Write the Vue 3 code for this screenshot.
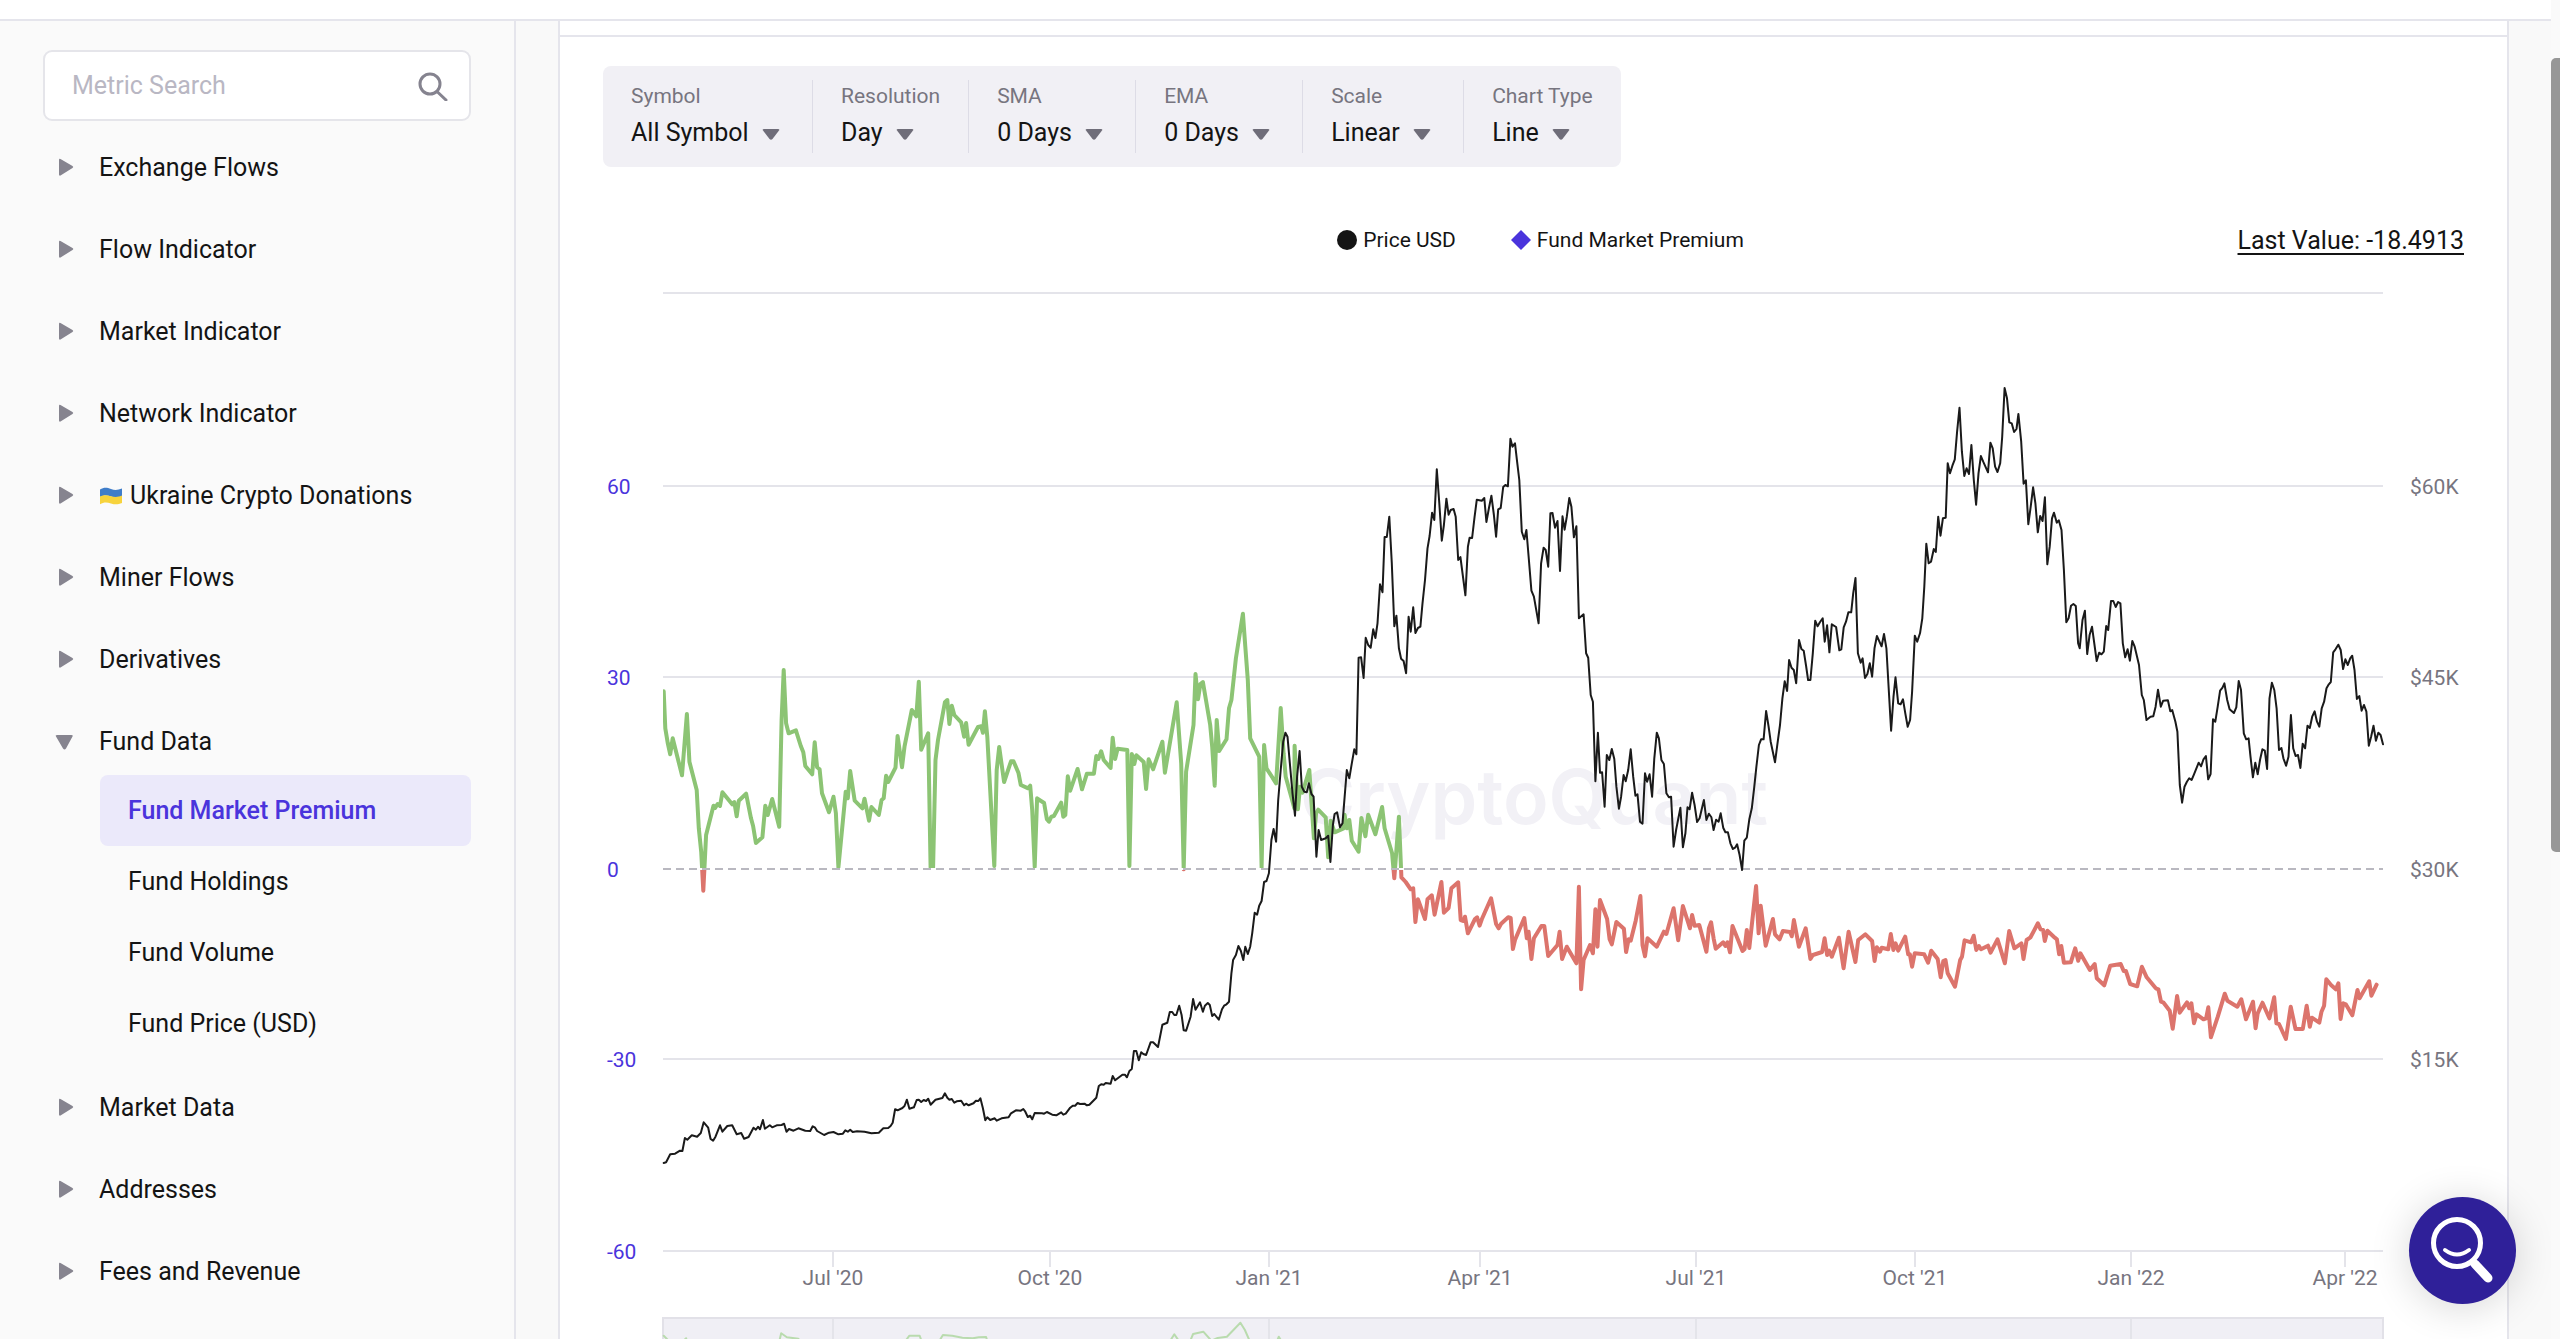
<script setup>
import { ref } from 'vue'

const query = ref('')

const groups = [
  { name: 'Exchange Flows' },
  { name: 'Flow Indicator' },
  { name: 'Market Indicator' },
  { name: 'Network Indicator' },
  { name: 'Ukraine Crypto Donations', flag: true },
  { name: 'Miner Flows' },
  { name: 'Derivatives' },
  {
    name: 'Fund Data',
    items: ['Fund Market Premium', 'Fund Holdings', 'Fund Volume', 'Fund Price (USD)'],
  },
  { name: 'Market Data' },
  { name: 'Addresses' },
  { name: 'Fees and Revenue' },
]
const activeItem = ref('Fund Market Premium')

const filters = [
  { id: 'symbol', label: 'Symbol', value: 'All Symbol' },
  { id: 'resolution', label: 'Resolution', value: 'Day' },
  { id: 'sma', label: 'SMA', value: '0 Days' },
  { id: 'ema', label: 'EMA', value: '0 Days' },
  { id: 'scale', label: 'Scale', value: 'Linear' },
  { id: 'type', label: 'Chart Type', value: 'Line' },
]

const left = 663
const right = 2383
const zeroY = 869

const rows = [
  { y: 293 },
  { y: 486, premium: '60', price: '$60K' },
  { y: 677, premium: '30', price: '$45K' },
  { y: 869, premium: '0', price: '$30K', zero: true },
  { y: 1059, premium: '-30', price: '$15K' },
  { y: 1251, premium: '-60' },
]

const months = [
  { x: 833, label: "Jul '20", major: true },
  { x: 1050, label: "Oct '20" },
  { x: 1269, label: "Jan '21", major: true },
  { x: 1480, label: "Apr '21" },
  { x: 1696, label: "Jul '21", major: true },
  { x: 1915, label: "Oct '21" },
  { x: 2131, label: "Jan '22", major: true },
  { x: 2345, label: "Apr '22" },
]

// Each run of a series has its own origin and horizontal density.
function place(x0, y0, span, points) {
  return points
    .trim()
    .split(/\s+/)
    .map((pair) => {
      const [x, y] = pair.split(',').map(Number)
      return `${(x0 + (x * span) / 1568).toFixed(1)},${(y0 + y / 3).toFixed(1)}`
    })
    .join(' ')
}

const premium = [
  place(640, 580, 640, `
    58,334 62,445 68,490 74,523 80,475 103,586 115,402 121,545 139,630 144,745 150,815 155,932 162,765
    180,677 184,684 190,672 196,678 202,637 226,673 231,666 237,709 242,662 260,641 272,715 277,738
    284,789 300,772 307,677 313,705 324,657 341,740 347,420 352,270 358,430 364,460 382,451 394,498
    400,517 405,558 422,583 428,487 434,562 440,568 446,640 463,697 474,650 480,700 486,862 504,635
    509,655 515,573 526,662 545,685 550,656 561,722 567,681 585,705 592,660 597,655 603,587 608,606
    626,563 631,468 642,562 648,500 666,390 677,409 683,305 689,509 706,460 712,862 718,862 724,540
    730,480 747,367 753,360 758,432 764,377 770,405 787,427 794,470 799,429 805,494 828,441 836,439
    840,458 845,394 851,470 868,858 874,570 880,501 892,606 909,544 915,544 927,578 933,615 951,625
    956,617 961,690 967,860 973,655 990,669 997,718 1002,725 1008,710 1014,708 1032,668 1037,710
    1042,705 1048,589 1054,632 1072,567 1083,628 1095,581 1112,581 1118,528 1123,537 1130,514 1136,540
    1153,564 1158,473 1164,537 1170,506 1194,510 1199,858 1205,522 1211,552 1216,526 1234,546 1240,627
    1246,538 1257,568 1280,485 1286,578 1315,367 1326,550 1332,868 1338,575 1356,435 1361,282 1367,358
    1373,312 1379,306 1397,435 1402,500 1408,617 1413,420 1419,513 1437,478 1443,385 1449,360 1460,235
    1477,101 1483,200 1489,300 1495,475 1517,530 1523,862 1529,495 1535,565`),
  place(1240, 400, 560, `
    101,1150 114,924 122,1060 128,1130 146,1200 152,1225 153,1037 162,1228 168,1160 175,1178 194,1110
    207,1315 213,1240 219,1229 240,1252 247,1372 254,1262 265,1297 290,1285 293,1244 299,1285 306,1260
    313,1322 332,1355 340,1254 351,1309 359,1244 379,1303 398,1221 405,1285 426,1360 432,1435 445,1250`),
  place(1340, 820, 560, `
    172,172 184,186 198,208 205,205 211,306 218,238 238,297 245,238 257,226 265,284 284,186 291,278
    304,264 312,205 331,187 338,300 346,303 350,290 358,340 378,297 384,292 391,317 397,298 423,235
    437,312 444,325 451,311 471,292 478,294 484,387 490,360 516,294 523,355 528,335 536,417 543,355
    564,318 572,318 583,408 609,375 615,335 622,417 635,380 662,430 669,200 675,508 682,420 700,375
    708,400 715,268 721,380 728,240 748,297 755,358 761,373 774,306 795,326 801,396 808,358 814,362
    828,302 841,228 847,375 854,409 861,355 887,380 907,335 914,342 934,265 947,361 960,258 980,325
    986,285 993,317 1006,315 1026,395 1033,325 1039,307 1046,355 1052,386 1073,367 1079,378 1085,367
    1092,397 1099,318 1127,393 1133,387 1139,330 1146,384 1165,198 1172,340 1178,257 1192,377 1212,297
    1218,343 1231,358 1240,333 1260,336 1265,349 1271,300 1285,380 1304,325 1317,417 1324,405 1350,396
    1357,355 1364,405 1370,392 1377,410 1397,353 1410,445 1424,335 1443,426 1451,360 1471,343 1490,363
    1497,423 1503,382`),
  place(1880, 860, 680, `
    0,275 4,263 19,268 25,222 31,270 36,250 42,272 58,230 65,283 69,283 74,320 80,280 102,283 111,308
    118,272 133,297 140,352 146,303 151,300 156,340 173,380 185,300 189,290 195,241 210,247 216,227
    222,270 228,258 233,268 249,257 255,278 271,238 288,310 298,213 310,265 326,250 331,297 338,240
    347,232 364,190 370,208 376,210 380,243 386,212 403,233 408,238 413,283 418,258 424,308 440,307
    450,265 457,302 462,280 484,330 495,312 500,355 517,376 531,317 555,312 562,333 567,333 577,372
    593,379 604,320 615,352 636,385 642,388 648,425 654,428 668,452 675,506 685,408 691,458 708,427
    713,445 718,430 724,490 730,463 746,478 752,475 757,442 763,532 779,470 795,401 801,422 824,440
    833,418 844,478 860,425 866,505 871,460 882,428 898,475 909,412 914,490 920,492 936,537 947,440
    958,507 975,507 984,437 991,500 996,473 1013,488 1018,455 1024,437 1029,358 1040,375 1051,388
    1057,370 1062,477 1068,430 1074,433 1089,466 1101,390 1106,415 1128,364 1133,407 1145,374`),
].join(' ')

const price = [
  place(640, 950, 640, `
    58,639 64,637 74,613 86,611 98,602 104,603 110,564 116,569 127,556 140,560 149,549 156,517 167,533
    173,567 179,572 185,560 196,526 202,545 214,528 226,526 237,553 248,549 255,566 266,561 278,533
    284,539 289,530 294,538 301,510 306,536 318,526 324,532 335,526 347,525 353,521 359,545 365,537
    376,542 388,535 405,542 417,543 423,529 429,533 434,543 451,555 463,548 474,546 486,553 497,551
    503,541 509,545 515,539 521,546 532,544 550,545 567,550 585,548 596,535 608,534 614,528 619,518
    625,478 631,481 643,474 648,468 654,449 660,476 671,472 678,450 683,449 689,456 695,450 701,453
    706,446 712,464 724,449 741,444 747,430 753,443 758,449 764,447 770,458 776,454 787,452 794,466
    799,461 805,466 817,460 823,452 829,453 834,445 840,475 846,511 851,502 858,510 869,505 874,512
    886,505 903,502 909,490 921,481 933,482 939,477 944,485 950,501 956,497 961,508 967,489 985,490
    990,491 997,486 1010,494 1020,496 1032,487 1037,494 1043,491 1054,473 1060,467 1066,467 1072,459
    1078,462 1089,461 1095,466 1101,464 1118,443 1124,408 1130,403 1136,404 1141,399 1153,401 1158,378
    1164,391 1182,374 1188,374 1193,382 1199,363 1205,357 1210,303 1216,303 1222,331 1228,307 1233,312
    1240,315 1251,277 1257,277 1269,291 1280,224 1292,218 1298,186 1304,186 1309,195 1314,195 1321,167
    1327,195 1332,241 1338,242 1349,200 1355,147 1361,179 1372,157 1379,185 1384,167 1391,159 1396,165
    1402,198 1407,192 1418,209 1426,178 1431,167 1437,163 1443,155 1449,70`),
  place(640, 580, 640, `
    1453,1140 1460,1125 1466,1098 1472,1112 1478,1140 1483,1100 1489,1122 1495,1100 1500,1060 1506,998
    1512,1004 1517,977 1523,963 1529,906 1535,903`),
  place(1240, 400, 560, `
    81,1420 88,1320 94,1287 101,1325 107,1200 114,1110 121,1025 127,998 133,1010 140,1095 147,1180
    154,1247 160,1130 167,1053 173,1160 180,1175 187,1177 193,1150 200,1182 206,1190 214,1370 220,1290
    227,1320 240,1315 247,1307 253,1386 260,1275 265,1242 272,1237 280,1282 287,1270 299,1110 306,1135
    313,1090 320,1048 326,1063 332,773 339,772 346,834 352,713 359,735 366,743 373,688 379,714 385,670
    392,553 399,577 405,411 411,411 418,350 425,490 432,679 438,647 445,745 451,776 458,783 465,820
    472,650 478,695 485,622 491,699 498,684 505,680 511,610 518,540 525,445 531,408 538,338 544,360
    551,208 558,310 565,422 571,375 578,296 584,344 590,330 598,327 604,350 611,480 617,471 631,586
    638,440 643,413 650,414 657,350 663,299 677,302 684,294 690,366 697,325 704,287 711,345 717,410
    723,328 730,324 737,261 743,255 750,259 757,116 763,140 770,130 776,185 782,240 789,395 796,418
    802,390 809,480 816,572 823,590 836,670 843,490 850,443 856,450 863,500 869,340 875,339 882,383
    889,363 896,513 903,349 909,389 915,350 922,294 928,320 935,412 942,379 949,655 962,643 969,760
    975,773 982,885 988,905 995,1144 1002,998 1008,1118 1014,1117 1021,1220 1027,1065 1034,1080
    1041,1047 1048,1077 1054,1160 1061,1226 1067,1190 1074,1125 1080,1144 1087,1110 1094,1048 1101,1130
    1107,1187 1113,1183 1120,1265 1127,1271 1134,1120 1140,1145 1147,1123 1154,1190 1160,1075 1167,998
    1173,1015 1180,1080 1187,1092 1194,1180 1201,1192 1207,1190 1214,1340 1221,1290 1233,1223 1240,1342
    1247,1300 1253,1222 1259,1228 1266,1178 1273,1215 1280,1266 1287,1255 1299,1200 1306,1260 1313,1241
    1320,1252 1326,1290 1333,1259 1340,1265 1346,1240 1353,1283 1359,1297 1366,1297 1373,1330 1380,1347
    1387,1342 1392,1333 1399,1365 1406,1410 1412,1322 1419,1313 1426,1258 1433,1225 1440,1160 1446,1100
    1453,1035 1459,1018 1466,1018 1473,933 1480,980 1486,1025 1498,1087 1505,1030`),
  place(1780, 370, 620, `
    0,1065 6,985 12,934 18,963 23,870 29,893 35,900 41,940 48,810 54,837 60,842 66,888 71,930 77,930
    83,850 89,752 95,769 101,757 108,745 113,815 119,766 125,847 131,763 142,771 150,841 155,838
    161,772 167,755 173,727 180,727 185,670 191,624 197,850 204,878 209,865 215,924 221,912 227,880
    233,920 239,835 245,798 257,829 263,792 269,835 281,1082 287,980 292,922 299,1000 305,1003 311,988
    317,1030 323,1070 329,1050 334,965 341,797 347,815 354,790 360,745 365,650 370,521 376,580 382,575
    389,537 394,546 400,440 406,497 412,445 419,443 424,280 430,310 436,287 442,268 448,185 454,113
    460,245 466,318 472,295 478,312 484,225 490,330 496,404 502,310 508,258 514,275 526,307 532,218
    538,235 544,290 550,306 557,280 562,200 568,54 574,85 580,157 586,160 592,186 598,177 603,132
    610,215 616,341 622,331 628,463 634,410 640,352 646,400 652,487 658,438 664,453 670,382 676,583
    682,530 688,445 693,428 700,458 705,451 712,480 718,600 724,757 730,745 736,707 742,702 748,708
    754,820 758,835 765,750 771,722 777,852 783,795 789,770 801,873 807,848 813,853 819,845 825,768
    830,780 837,693 843,693 849,711 855,696 861,700 867,820 873,862 879,838 885,872 891,813 897,830
    908,885 915,975 920,990 927,1050 937,1040 944,1039 950,1010 956,959 963,1010 969,992 981,991
    987,1024 992,1020 1000,1055 1005,1085 1011,1245 1017,1298 1023,1250 1029,1235 1035,1225 1041,1230
    1047,1213 1059,1178 1065,1189 1071,1168 1077,1158 1083,1228 1089,1212 1095,1048 1101,1055 1107,1010
    1113,962 1119,953 1124,940 1131,990 1137,1018 1148,1029 1154,1012 1160,933 1166,960 1173,1090
    1179,1108 1185,1105 1190,1160 1196,1222 1202,1178 1208,1213 1214,1170 1220,1138 1226,1142 1232,1197
    1238,985 1244,938 1250,960 1256,1015 1262,1140 1268,1134 1273,1165 1280,1187 1286,1160 1292,1035
    1298,1135 1304,1158 1310,1155 1316,1194 1322,1121 1328,1135 1334,1067 1340,1074 1346,1040 1352,1024
    1358,1055 1364,1070 1370,1015 1376,995 1382,955 1388,943 1393,936 1399,847 1405,838 1412,824
    1418,840 1424,897 1430,868 1436,885 1442,865 1447,857 1453,900 1459,987 1465,978 1471,1022
    1477,1005 1483,1025 1489,1127 1495,1100 1501,1067 1507,1112 1513,1088 1519,1095 1525,1123`),
].join(' ')

const overview = place(640, 950, 640, `
  58,1157 70,1172 100,1180 113,1165 120,1190 338,1190 346,1150 360,1162 388,1166 400,1190 640,1190
  660,1157 685,1157 695,1190 725,1190 742,1155 765,1157 790,1163 815,1165 830,1162 848,1161 855,1190
  1290,1190 1309,1153 1330,1190 1342,1190 1355,1152 1380,1145 1400,1172 1415,1164 1438,1160 1471,1118
  1482,1140 1500,1190 1555,1190 1565,1160 1580,1190`)
</script>

<template>
  <div class="page">
    <div class="content">
      <header class="topbar"></header>
      <div class="body">
        <aside class="sidebar">
          <div class="search">
            <input v-model="query" type="text" placeholder="Metric Search" aria-label="Metric Search" />
            <svg width="30" height="30" viewBox="0 0 30 30" aria-hidden="true">
              <circle cx="12" cy="13" r="10" />
              <path d="M19 20.500 28 29" />
            </svg>
          </div>
          <nav class="nav" aria-label="Metrics">
            <div v-for="group in groups" :key="group.name">
              <button type="button" class="group" :aria-expanded="!!group.items">
                <svg class="marker" width="20" height="20" viewBox="0 0 20 20" aria-hidden="true">
                  <path v-if="group.items" d="M2 3h14.500q2 0 1 1.500L11 16.500q-1.500 2-3 0L1 4.500Q0 3 2 3z" />
                  <path v-else d="M4 2Q4 0 5.500 1L17.500 8q1.500 1 0 2L5.500 17.500Q4 18 4 16.500z" />
                </svg>
                <svg v-if="group.flag" class="flag" width="24" height="20" viewBox="0 0 24 20" role="img" aria-label="Ukraine">
                  <path d="M1 3.500C5 1 8 1.500 12 3s7 1 11-.500V10c-4 2-7 2-11 .500S5 9 1 11z" fill="#3f7dc9" />
                  <path d="M1 10.500C5 8.500 8 9 12 10.200s7 1 11-.700V17c-4 1.700-7 1.700-11 .500s-7-1.500-11 .700z" fill="#f7d33c" />
                </svg>
                <span>{{ group.name }}</span>
              </button>
              <ul v-if="group.items" class="items">
                <li v-for="item in group.items" :key="item">
                  <a href="#" :class="{ active: item === activeItem }" @click.prevent="activeItem = item">{{ item }}</a>
                </li>
              </ul>
            </div>
          </nav>
        </aside>

        <main class="main">
          <section class="card">
            <div class="strip"></div>
            <div class="filters">
              <div v-for="filter in filters" :key="filter.id" class="filter">
                <label :for="filter.id">{{ filter.label }}</label>
                <div class="pick">
                  <select :id="filter.id">
                    <option>{{ filter.value }}</option>
                  </select>
                  <svg width="18" height="14" viewBox="0 0 18 14" aria-hidden="true">
                    <path d="M2 3h14q2 0 1 1.500L10.500 13Q9 14.500 7.500 13L1 4.500Q0 3 2 3z" />
                  </svg>
                </div>
              </div>
            </div>

            <div class="legend-row">
              <div class="legend">
                <button type="button">
                  <svg width="20" height="20" viewBox="0 0 20 20" aria-hidden="true"><circle cx="10" cy="10" r="10" fill="#141414" /></svg>
                  Price USD
                </button>
                <button type="button">
                  <svg width="20" height="20" viewBox="0 0 20 20" aria-hidden="true"><path d="M10 0 20 10 10 20 0 10z" fill="#4a34dc" /></svg>
                  Fund Market Premium
                </button>
              </div>
              <a href="#" class="last" @click.prevent>Last Value: -18.4913</a>
            </div>

            <svg class="chart" viewBox="560 270 1947 1069" role="img" aria-label="Fund Market Premium and Price USD">
              <defs>
                <clipPath id="above"><rect :x="left" y="270" :width="right - left" :height="zeroY - 271" /></clipPath>
                <clipPath id="below"><rect :x="left" :y="zeroY + 1" :width="right - left" height="380" /></clipPath>
              </defs>

              <text class="watermark" x="1534" y="824">CryptoQuant</text>

              <g v-for="row in rows" :key="row.y">
                <line :x1="left" :x2="right" :y1="row.y" :y2="row.y" :class="row.zero ? 'zero' : 'grid'" />
                <text v-if="row.premium" class="premium-label" x="607" :y="row.y + 8">{{ row.premium }}</text>
                <text v-if="row.price" class="axis-label" x="2410" :y="row.y + 8">{{ row.price }}</text>
              </g>
              <g v-for="month in months" :key="month.label">
                <line :x1="month.x" :x2="month.x" y1="1252" y2="1267" class="grid" />
                <text class="axis-label month" :x="month.x" y="1285">{{ month.label }}</text>
              </g>

              <polyline class="line up" :points="premium" clip-path="url(#above)" />
              <polyline class="line down" :points="premium" clip-path="url(#below)" />
              <polyline class="line price" :points="price" />

              <rect class="overview" x="663" y="1318" width="1720" height="120" />
              <template v-for="month in months" :key="month.x">
                <line v-if="month.major" class="grid" :x1="month.x" :x2="month.x" y1="1319" y2="1438" />
              </template>
              <polyline class="line preview" :points="overview" />
            </svg>
          </section>
        </main>
      </div>
    </div>

    <div class="scrollbar" aria-hidden="true"><div class="thumb"></div></div>

    <button type="button" class="help" aria-label="Search help">
      <svg viewBox="0 0 107 107" aria-hidden="true">
        <circle cx="48" cy="46" r="23.500" stroke-width="5" />
        <path d="M36 53q12 9 24 0" stroke-width="4" />
        <path d="M66 67 79 81" stroke-width="9" />
      </svg>
    </button>
  </div>
</template>

<style>
body {
  margin: 0;
}
</style>

<style scoped>
* {
  box-sizing: border-box;
}

.page {
  position: relative;
  display: flex;
  height: 100vh;
  overflow: hidden;
  background: #f9f9f9;
  color: #141414;
  font-family: Roboto, "Liberation Sans", sans-serif;
  font-size: 25px;
  line-height: 30px;
}

button,
input,
select {
  padding: 0;
  border: 0;
  background: none;
  color: inherit;
  font: inherit;
}

.content {
  flex: 1;
  min-width: 0;
  display: flex;
  flex-direction: column;
}

.topbar {
  flex: none;
  height: 21px;
  background: #fff;
  border-bottom: 2px solid #e5e5ec;
}

.body {
  flex: 1;
  min-height: 0;
  display: flex;
}

.sidebar {
  flex: none;
  width: 516px;
  padding: 29px 43px 0 43px;
  background: #fafafa;
  border-right: 2px solid #e5e5ec;
}

.search {
  display: flex;
  align-items: center;
  height: 71px;
  padding: 0 21px 0 27px;
  background: #fff;
  border: 2px solid #e5e5ea;
  border-radius: 9px;
}

.search input {
  flex: 1;
  min-width: 0;
  outline: none;
}

.search input::placeholder {
  color: #b9b7c3;
  opacity: 1;
}

.search svg {
  fill: none;
  stroke: #85838f;
  stroke-width: 3;
  stroke-linecap: round;
}

.nav {
  display: flex;
  flex-direction: column;
  gap: 16px;
  padding-top: 14px;
}

.group {
  display: flex;
  align-items: center;
  width: 100%;
  height: 66px;
  padding-left: 12px;
  text-align: left;
}

.marker {
  flex: none;
  margin-right: 24px;
  fill: #86848f;
}

.flag {
  flex: none;
  margin-right: 7px;
}

.items {
  margin: 0;
  padding: 0 0 0 57px;
  list-style: none;
}

.items a {
  display: flex;
  align-items: center;
  height: 71px;
  padding-left: 28px;
  border-radius: 8px;
  color: inherit;
  text-decoration: none;
}

.items a.active {
  background: #ebe9fa;
  color: #4a34dc;
  font-weight: 500;
}

.main {
  flex: 1;
  min-width: 0;
  padding: 0 42px;
}

.card {
  height: 100%;
  overflow: hidden;
  background: #fff;
  border: solid #e5e5ec;
  border-width: 0 2px;
}

.strip {
  height: 16px;
  border-bottom: 2px solid #e5e5ec;
}

.filters {
  display: flex;
  width: fit-content;
  margin: 29px 0 0 43px;
  padding: 14px 0;
  background: #f1f0f5;
  border-radius: 8px;
}

.filter {
  height: 73px;
  padding: 0 28px;
}

.filter + .filter {
  border-left: 1px solid #dddce6;
}

.filter label {
  display: block;
  color: #77757f;
  font-size: 21px;
  line-height: 32px;
}

.pick {
  display: flex;
  align-items: center;
  gap: 13px;
  height: 42px;
  padding-right: 4px;
}

.pick select {
  appearance: none;
  outline: none;
}

.pick svg {
  fill: #6f6d79;
}

.legend-row {
  display: grid;
  grid-template-columns: 1fr auto 1fr;
  align-items: center;
  height: 60px;
  margin-top: 43px;
  padding: 0 43px 0 57px;
}

.legend {
  grid-column: 2;
  display: flex;
  gap: 55px;
}

.legend button {
  display: flex;
  align-items: center;
  gap: 6px;
  font-size: 21px;
}

.last {
  justify-self: end;
  padding-top: 2px;
  color: inherit;
  text-decoration-thickness: 2px;
  text-underline-offset: 4px;
}

.chart {
  display: block;
  width: 100%;
}

.chart text {
  font-size: 21px;
}

.chart .watermark {
  fill: #f2f1f6;
  font-family: Inter, sans-serif;
  font-size: 75px;
  font-weight: 600;
  text-anchor: middle;
}

.grid {
  stroke: #e4e4ea;
  stroke-width: 2;
}

.zero {
  stroke: #b9b8c0;
  stroke-width: 2;
  stroke-dasharray: 8 5;
}

.premium-label {
  fill: #4a34dc;
}

.axis-label {
  fill: #77757f;
}

.month {
  text-anchor: middle;
}

.line {
  fill: none;
  stroke-linejoin: round;
  stroke-linecap: round;
}

.up {
  stroke: #8cc474;
  stroke-width: 4;
}

.down {
  stroke: #dc746c;
  stroke-width: 4;
}

.price {
  stroke: #1a1a1a;
  stroke-width: 2;
}

.overview {
  fill: #f0eff5;
  stroke: #e2e1e8;
  stroke-width: 2;
}

.preview {
  stroke: #b9dbae;
  stroke-width: 2;
}

.scrollbar {
  flex: none;
  width: 9px;
  padding-top: 58px;
  background: #fafafa;
}

.thumb {
  height: 62%;
  background: #979797;
  border-radius: 5px 0 0 5px;
}

.help {
  position: absolute;
  right: 44px;
  bottom: 35px;
  width: 107px;
  height: 107px;
  border-radius: 50%;
  background: #2f2099;
  box-shadow: 0 4px 40px rgba(0, 0, 0, 0.16);
}

.help svg {
  display: block;
  fill: none;
  stroke: #fff;
  stroke-linecap: round;
}
</style>
